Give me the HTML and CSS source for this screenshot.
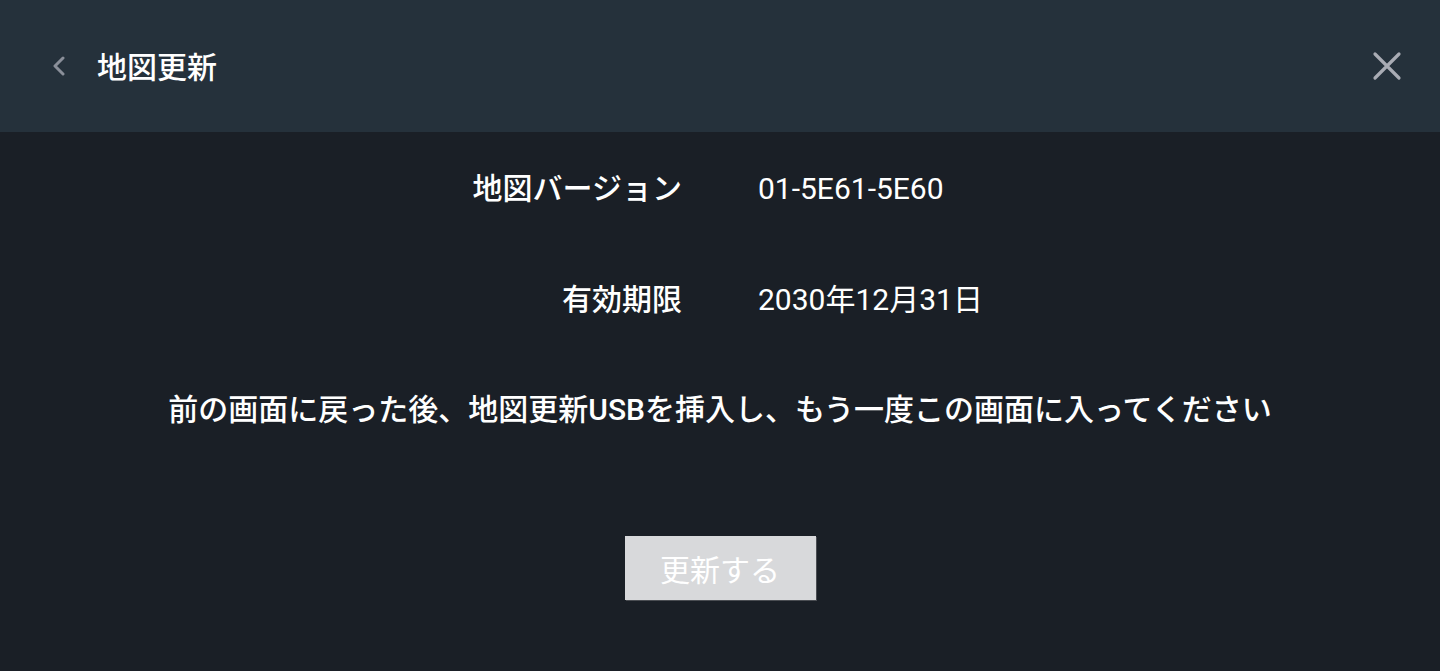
FILE: index.html
```html
<!DOCTYPE html>
<html lang="ja">
<head>
<meta charset="utf-8">
<link rel="stylesheet" href="styles.css">
</head>
<body>

<div class="topBar">
	<span class="backBtn">
		<svg width="14" height="20" viewBox="0 0 14 20"><path d="M11 2 L3 10 L11 18" fill="none" stroke="#8a8f99" stroke-width="3" stroke-linecap="round" stroke-linejoin="round"/></svg>
	</span>
	<span class="title">地図更新</span>
	<span class="closeBtn">
		<svg width="30" height="30" viewBox="0 0 30 30"><path d="M3 3 L27 27 M27 3 L3 27" fill="none" stroke="#a9acb4" stroke-width="3.2" stroke-linecap="round"/></svg>
	</span>
</div>

<div class="content">
	<div class="info-grid">
		<div class="label">地図バージョン</div>
		<div class="value">01-5E61-5E60</div>
		<div class="label">有効期限</div>
		<div class="value">2030年12月31日</div>
	</div>
	<p class="message">前の画面に戻った後、地図更新USBを挿入し、もう一度この画面に入ってください</p>
	<button class="updateBtn" type="button">更新する</button>
</div>

</body>
</html>
```

FILE: styles.css
```css
html, body {
	margin:0;
	height:100%;
}
body {
	background-color:#1a1f26;
	color:#ffffff;
	font-family:Roboto, "Noto Sans CJK JP", sans-serif;
	font-size:30px;
	overflow:hidden;
}
.topBar {
	height:132px;
	background-color:#25313b;
	display:flex;
	align-items:center;
	padding:0 38px 0 52px;
	box-sizing:border-box;
}
.backBtn {
	display:flex;
	width:16px;
	margin-right:29px;
}
.title {
	font-size:30px;
	font-weight:500;
	flex:1;
	margin-top:-2px;
}
.closeBtn {
	display:flex;
}
.content {
	display:flex;
	flex-direction:column;
	align-items:center;
	padding-top:36px;
}
.info-grid {
	display:grid;
	grid-template-columns:1fr 1fr;
	column-gap:76px;
	row-gap:69px;
	width:100%;
	line-height:42px;
}
.label {
	text-align:right;
	font-weight:500;
}
.value {
	text-align:left;
}
.message {
	margin:68px 0 0 0;
	line-height:42px;
	font-weight:500;
}
.updateBtn {
	margin-top:105px;
	width:191px;
	height:64px;
	border:none;
	background-color:#d8d9db;
	color:#ffffff;
	font:inherit;
	font-size:30px;
	box-shadow:1px 1px 0 #4a4d52;
	padding:0;
}
```
